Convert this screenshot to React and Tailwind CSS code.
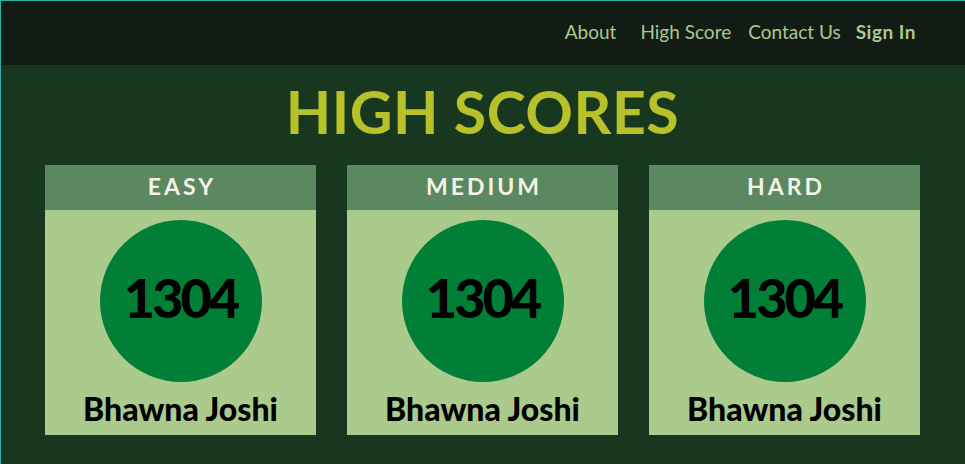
import React from 'react';

const scores = [
  { level: 'EASY', score: 1304, name: 'Bhawna Joshi' },
  { level: 'MEDIUM', score: 1304, name: 'Bhawna Joshi' },
  { level: 'HARD', score: 1304, name: 'Bhawna Joshi' },
];

const ScoreCard = ({ level, score, name }) => (
  <div className="w-[271px] h-[270px] flex flex-col bg-[#abcb8d]">
    <div className="h-[45px] bg-[#5b8761] flex items-center justify-center pb-[3px]">
      <span className="text-[23px] font-bold tracking-[3px] text-[#f3f3e6] leading-none pl-[3px]">{level}</span>
    </div>
    <div className="flex-1 flex flex-col items-center pt-[10px]">
      <div className="w-[162px] h-[162px] rounded-full bg-[#027f37] flex items-center justify-center pb-[6px]">
        <span className="text-[54px] font-black tracking-[-3px] text-black leading-none">{score}</span>
      </div>
      <p className="mt-[11px] text-[32px] font-black text-black leading-none">{name}</p>
    </div>
  </div>
);

const App = () => {
  return (
    <div
      className="min-h-[464px] bg-[#17381f] border-t border-l border-[#2ab3aa]"
      style={{ fontFamily: 'Lato, "Noto Sans", sans-serif' }}
    >
      <nav className="h-[64px] bg-[#121c15] flex items-center justify-end pr-[49px] pb-[2px] text-[19px] text-[#a9c98f]">
        <a className="mr-[24px]">About</a>
        <a className="mr-[17px]">High Score</a>
        <a className="mr-[15px]">Contact Us</a>
        <a className="font-bold tracking-[0.5px]">Sign In</a>
      </nav>

      <div className="pr-[1px]">
        <h1 className="text-center text-[59px] font-bold tracking-[0.5px] text-[#b8c02a] leading-none pt-[17px] h-[100px]">
          HIGH SCORES
        </h1>

        <div className="flex justify-center gap-[31px]">
          {scores.map((s) => (
            <ScoreCard key={s.level} {...s} />
          ))}
        </div>
      </div>
    </div>
  );
};

export default App;
